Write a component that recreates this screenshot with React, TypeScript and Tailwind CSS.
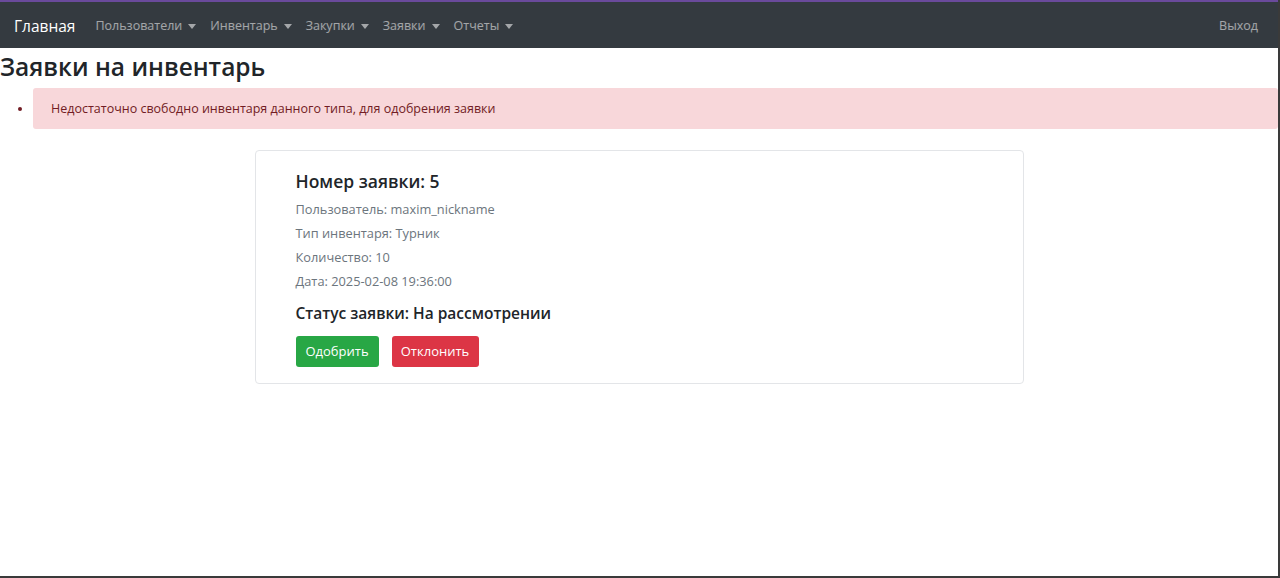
const font = { fontFamily: '"Open Sans", "Noto Sans", sans-serif' };

function Caret() {
  return <span className="ml-[6px] inline-block border-x-[4px] border-t-[5px] border-x-transparent border-t-current align-[2px]" />;
}

const menu = ['Пользователи', 'Инвентарь', 'Закупки', 'Заявки', 'Отчеты'];

export default function App() {
  return (
    <div className="h-[578px] w-[1280px] overflow-hidden border-r-2 border-b-2 border-[#3a3a3a] bg-white text-[#212529]" style={font}>
      <nav className="flex h-[48px] items-center border-t-2 border-[#6a4a9c] bg-[#343a40] pt-[3px] pl-[14px] pr-[20px]">
        <a className="mr-[20px] text-[15.5px] text-white">Главная</a>
        <ul className="flex gap-[14px] text-[12.5px] text-white/55">
          {menu.map((m) => (
            <li key={m} className="flex items-center">
              {m}
              <Caret />
            </li>
          ))}
        </ul>
        <a className="ml-auto text-[12.5px] text-white/55">Выход</a>
      </nav>

      <h1 className="mt-[1px] text-[24.5px] font-semibold leading-[36px]">Заявки на инвентарь</h1>

      <ul className="mt-[3px] list-disc pl-[33px] marker:text-[#721c24]">
        <li className="rounded-[3px] bg-[#f8d7da] px-[18px] py-[10px] text-[12.5px] leading-[21px] text-[#721c24]">
          Недостаточно свободно инвентаря данного типа, для одобрения заявки
        </li>
      </ul>

      <div className="mx-auto mt-[21px] w-[769px] rounded-[4px] border border-[#e3e5e8] px-[40px] pt-[17px] pb-[16px]">
        <h2 className="text-[17.5px] font-semibold leading-[26px]">Номер заявки: 5</h2>
        <div className="mt-[5px] flex flex-col gap-[3px] text-[12.8px] leading-[21px] text-[#6c757d]">
          <p>Пользователь: maxim_nickname</p>
          <p>Тип инвентаря: Турник</p>
          <p>Количество: 10</p>
          <p>Дата: 2025-02-08 19:36:00</p>
        </div>
        <h3 className="mt-[9px] text-[15.5px] font-semibold leading-[24px]">Статус заявки: На рассмотрении</h3>
        <div className="mt-[11px] flex gap-[13px]">
          <button className="h-[31px] w-[83px] rounded-[3px] bg-[#28a745] text-[13px] text-white">Одобрить</button>
          <button className="h-[31px] w-[87px] rounded-[3px] bg-[#dc3545] text-[13px] text-white">Отклонить</button>
        </div>
      </div>
    </div>
  );
}
